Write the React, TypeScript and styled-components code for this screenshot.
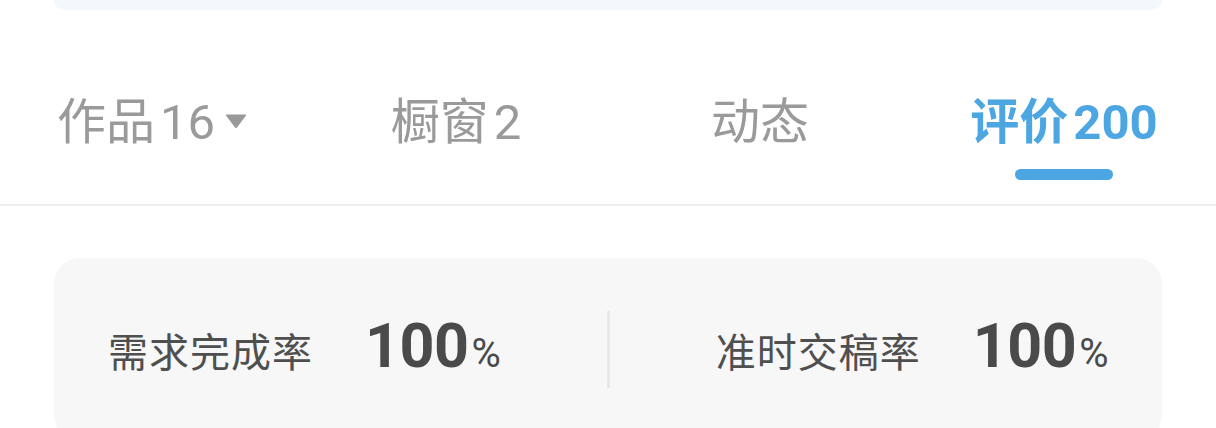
import React from "react";
import styled, { createGlobalStyle } from "styled-components";

const GlobalStyle = createGlobalStyle`
  html, body {
    margin: 0;
    padding: 0;
    background: #ffffff;
  }
  body {
    width: 1216px;
    height: 428px;
    overflow: hidden;
    font-family: "Roboto", "Noto Sans CJK SC", sans-serif;
  }
`;

interface TabData {
  label: string;
  count?: string;
  dropdown?: boolean;
}

const tabs: TabData[] = [
  { label: "作品", count: "16", dropdown: true },
  { label: "橱窗", count: "2" },
  { label: "动态" },
  { label: "评价", count: "200" },
];

const stats = [
  { label: "需求完成率", value: "100" },
  { label: "准时交稿率", value: "100" },
];

const App: React.FC = () => {
  const activeIndex = 3;

  return (
    <Page>
      <GlobalStyle />
      <TopCard />
      <TabBar>
        {tabs.map((tab, i) => (
          <Tab key={tab.label}>
            <TabLabel active={i === activeIndex}>
              {tab.label}
              {tab.count && <TabCount>{tab.count}</TabCount>}
              {tab.dropdown && (
                <Caret viewBox="0 0 22 16">
                  <path d="M1.5 1.5 H20.5 Q21.5 1.5 21 2.4 L12 14.6 Q11 15.8 10 14.6 L1 2.4 Q0.5 1.5 1.5 1.5 Z" />
                </Caret>
              )}
            </TabLabel>
            <Underline active={i === activeIndex} />
          </Tab>
        ))}
      </TabBar>
      <StatsCard>
        <Stat>
          <StatLabel>{stats[0].label}</StatLabel>
          <StatValue>
            {stats[0].value}
            <Percent>%</Percent>
          </StatValue>
        </Stat>
        <StatDivider />
        <Stat>
          <StatLabel>{stats[1].label}</StatLabel>
          <StatValue>
            {stats[1].value}
            <Percent>%</Percent>
          </StatValue>
        </Stat>
      </StatsCard>
    </Page>
  );
};

const Page = styled.div`
  width: 1216px;
  height: 428px;
  overflow: hidden;
`;

const TopCard = styled.div`
  height: 10px;
  margin: 0 54px;
  background: #f4f8fd;
  border-radius: 0 0 24px 24px;
`;

const TabBar = styled.div`
  display: flex;
  padding: 84px 0 24px;
  border-bottom: 2px solid #eeeeee;
`;

const Tab = styled.div`
  flex: 1;
  display: flex;
  flex-direction: column;
  align-items: center;
`;

const TabLabel = styled.div<{ active: boolean }>`
  display: flex;
  align-items: center;
  height: 58px;
  font-size: 49px;
  line-height: 58px;
  white-space: nowrap;
  color: ${({ active }) => (active ? "#4ba6e1" : "#9a9a9a")};
  font-weight: ${({ active }) => (active ? 700 : 400)};
`;

const TabCount = styled.span`
  margin-left: 5px;
`;

const Caret = styled.svg`
  width: 22px;
  height: 16px;
  margin-left: 10px;
  margin-top: -4px;
  fill: #9a9a9a;
`;

const Underline = styled.div<{ active: boolean }>`
  width: 98px;
  height: 11px;
  margin-top: 17px;
  border-radius: 6px;
  background: ${({ active }) => (active ? "#4ba6e1" : "transparent")};
`;

const StatsCard = styled.div`
  margin: 52px 54px 0;
  padding: 53px 54px;
  background: #f7f7f7;
  border-radius: 26px;
  display: flex;
  align-items: center;
  justify-content: space-between;
`;

const Stat = styled.div`
  display: flex;
  align-items: baseline;
  gap: 52px;
  line-height: 1;
  padding-bottom: 6px;
`;

const StatLabel = styled.span`
  font-family: "Noto Sans CJK SC", sans-serif;
  font-size: 40px;
  letter-spacing: 1px;
  color: #4f4f4f;
`;

const StatValue = styled.span`
  font-size: 61px;
  font-weight: 700;
  color: #4a4a4a;
  letter-spacing: -0.5px;
`;

const Percent = styled.span`
  font-size: 40px;
  font-weight: 400;
  margin-left: 3px;
`;

const StatDivider = styled.div`
  width: 3px;
  height: 77px;
  background: #e6e8ec;
`;

export default App;
